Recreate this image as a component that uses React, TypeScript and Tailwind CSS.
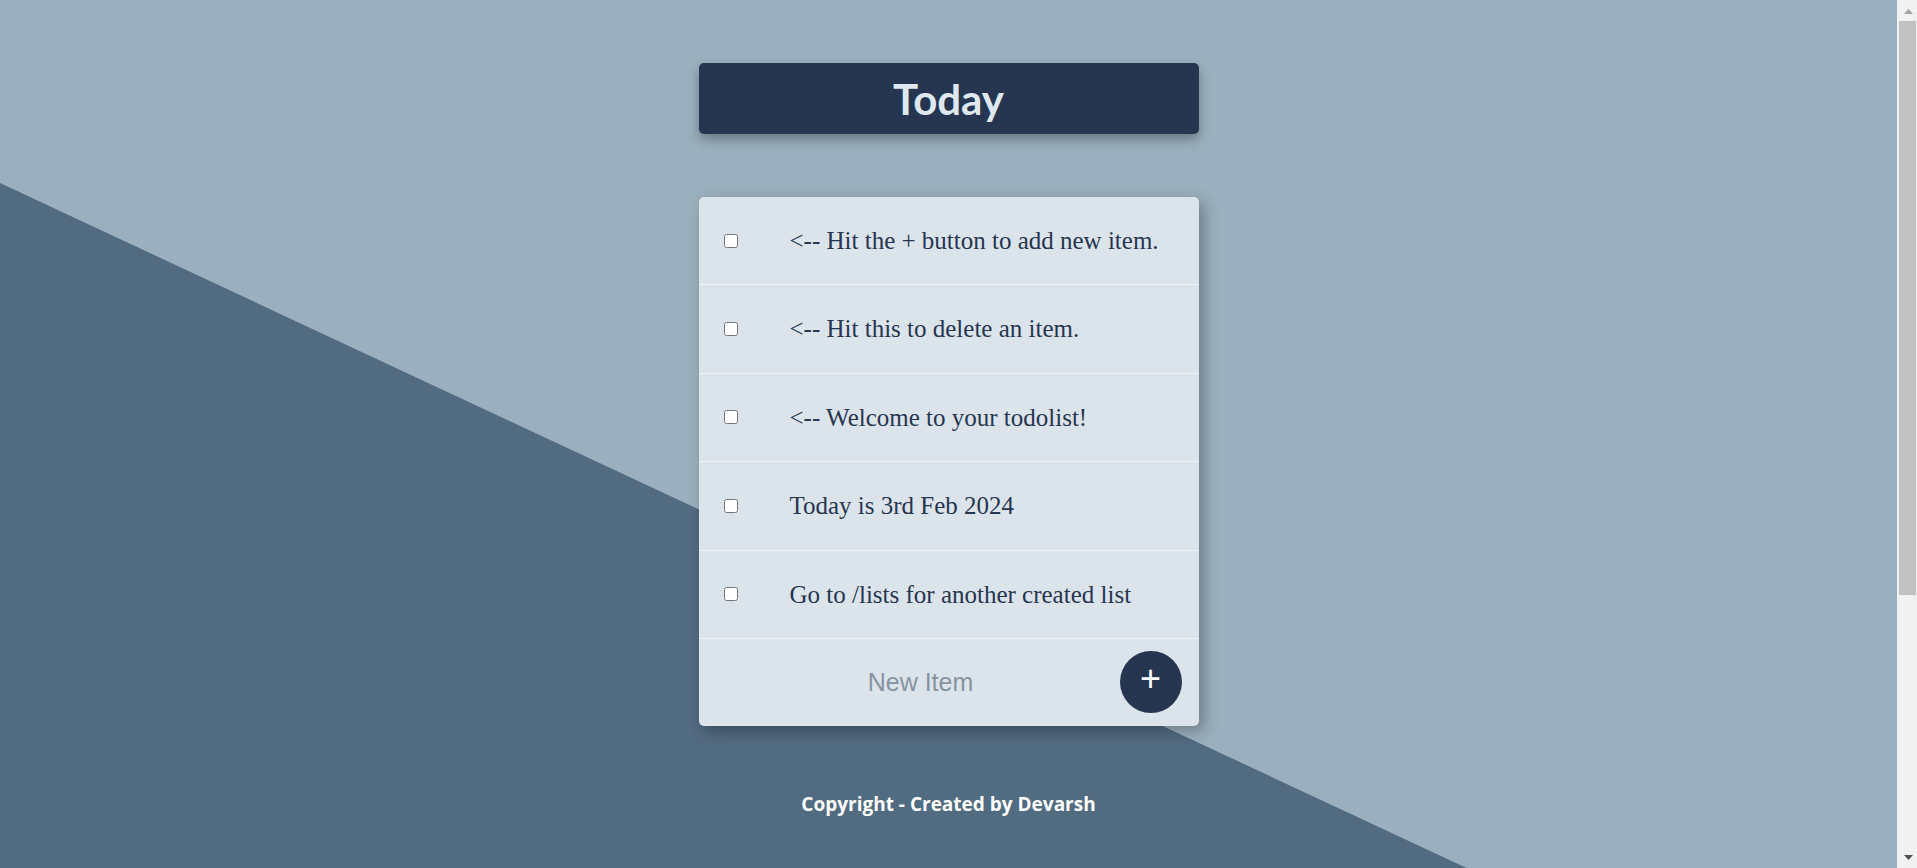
import React from 'react';

const items = [
  '<-- Hit the + button to add new item.',
  '<-- Hit this to delete an item.',
  '<-- Welcome to your todolist!',
  'Today is 3rd Feb 2024',
  'Go to /lists for another created list',
];

export default function App() {
  return (
    <div className="flex h-[868px] overflow-hidden">
      <div className="relative flex-1 bg-[#9bb0be] overflow-hidden">
        {/* diagonal backdrop */}
        <div className="absolute inset-0 bg-[#516b81] [clip-path:polygon(0_183px,1897px_1069px,1897px_100%,0_100%)]" />

        <div className="relative flex flex-col items-center pt-[63px]">
          <div className="w-[500px] h-[71px] rounded-[5px] bg-[#263650] flex items-center justify-center shadow-[0_6px_12px_rgba(0,0,0,0.3)]">
            <h1 className="text-[42px] font-bold text-[#dfe8f0] font-['Lato',sans-serif] leading-none">Today</h1>
          </div>

          {/* list */}
          <div className="mt-[63px] w-[500px] rounded-[5px] bg-[#dce4eb] shadow-[5px_5px_15px_rgba(0,0,0,0.3)]">
            {items.map((t) => (
              <div key={t} className="h-[88.4px] flex items-center border-b border-[#eef2f6]">
                <input type="checkbox" className="ml-[25px] w-[14px] h-[14px] m-0" />
                <p className="ml-[52px] text-[25px] text-[#263650] font-['Liberation_Serif',serif]">{t}</p>
              </div>
            ))}
            <form className="h-[87px] flex items-center" onSubmit={(e) => e.preventDefault()}>
              <input
                type="text"
                placeholder="New Item"
                className="ml-[24px] w-[396px] bg-transparent text-center text-[25px] font-['Liberation_Sans',sans-serif] text-[#263650] placeholder:text-[#8693a1] outline-none"
              />
              <button
                type="submit"
                className="ml-auto mr-[17px] w-[62px] h-[62px] rounded-full bg-[#263650] text-white flex items-center justify-center pb-[7px] text-[36px] font-['Liberation_Sans',sans-serif] leading-none"
              >
                +
              </button>
            </form>
          </div>

          <footer className="mt-[64px] text-white font-bold text-[19px] font-['Open_Sans',sans-serif]">
            Copyright - Created by Devarsh
          </footer>
        </div>
      </div>

      {/* page scrollbar */}
      <div className="w-[20px] shrink-0 bg-[#f1f1f1] flex flex-col">
        <div className="h-[21px] flex items-start justify-center pt-[9px] pl-[2px]">
          <svg width="9" height="5" viewBox="0 0 9 5"><path d="M4.5 0L9 5H0z" fill="#a3a3a3" /></svg>
        </div>
        <div className="ml-[2px] w-[17px] h-[574px] bg-[#c1c1c1]" />
        <div className="mt-auto h-[17px] flex items-start justify-center pt-[4px] pl-[2px]">
          <svg width="9" height="5" viewBox="0 0 9 5"><path d="M0 0H9L4.5 5z" fill="#505050" /></svg>
        </div>
      </div>
    </div>
  );
}
